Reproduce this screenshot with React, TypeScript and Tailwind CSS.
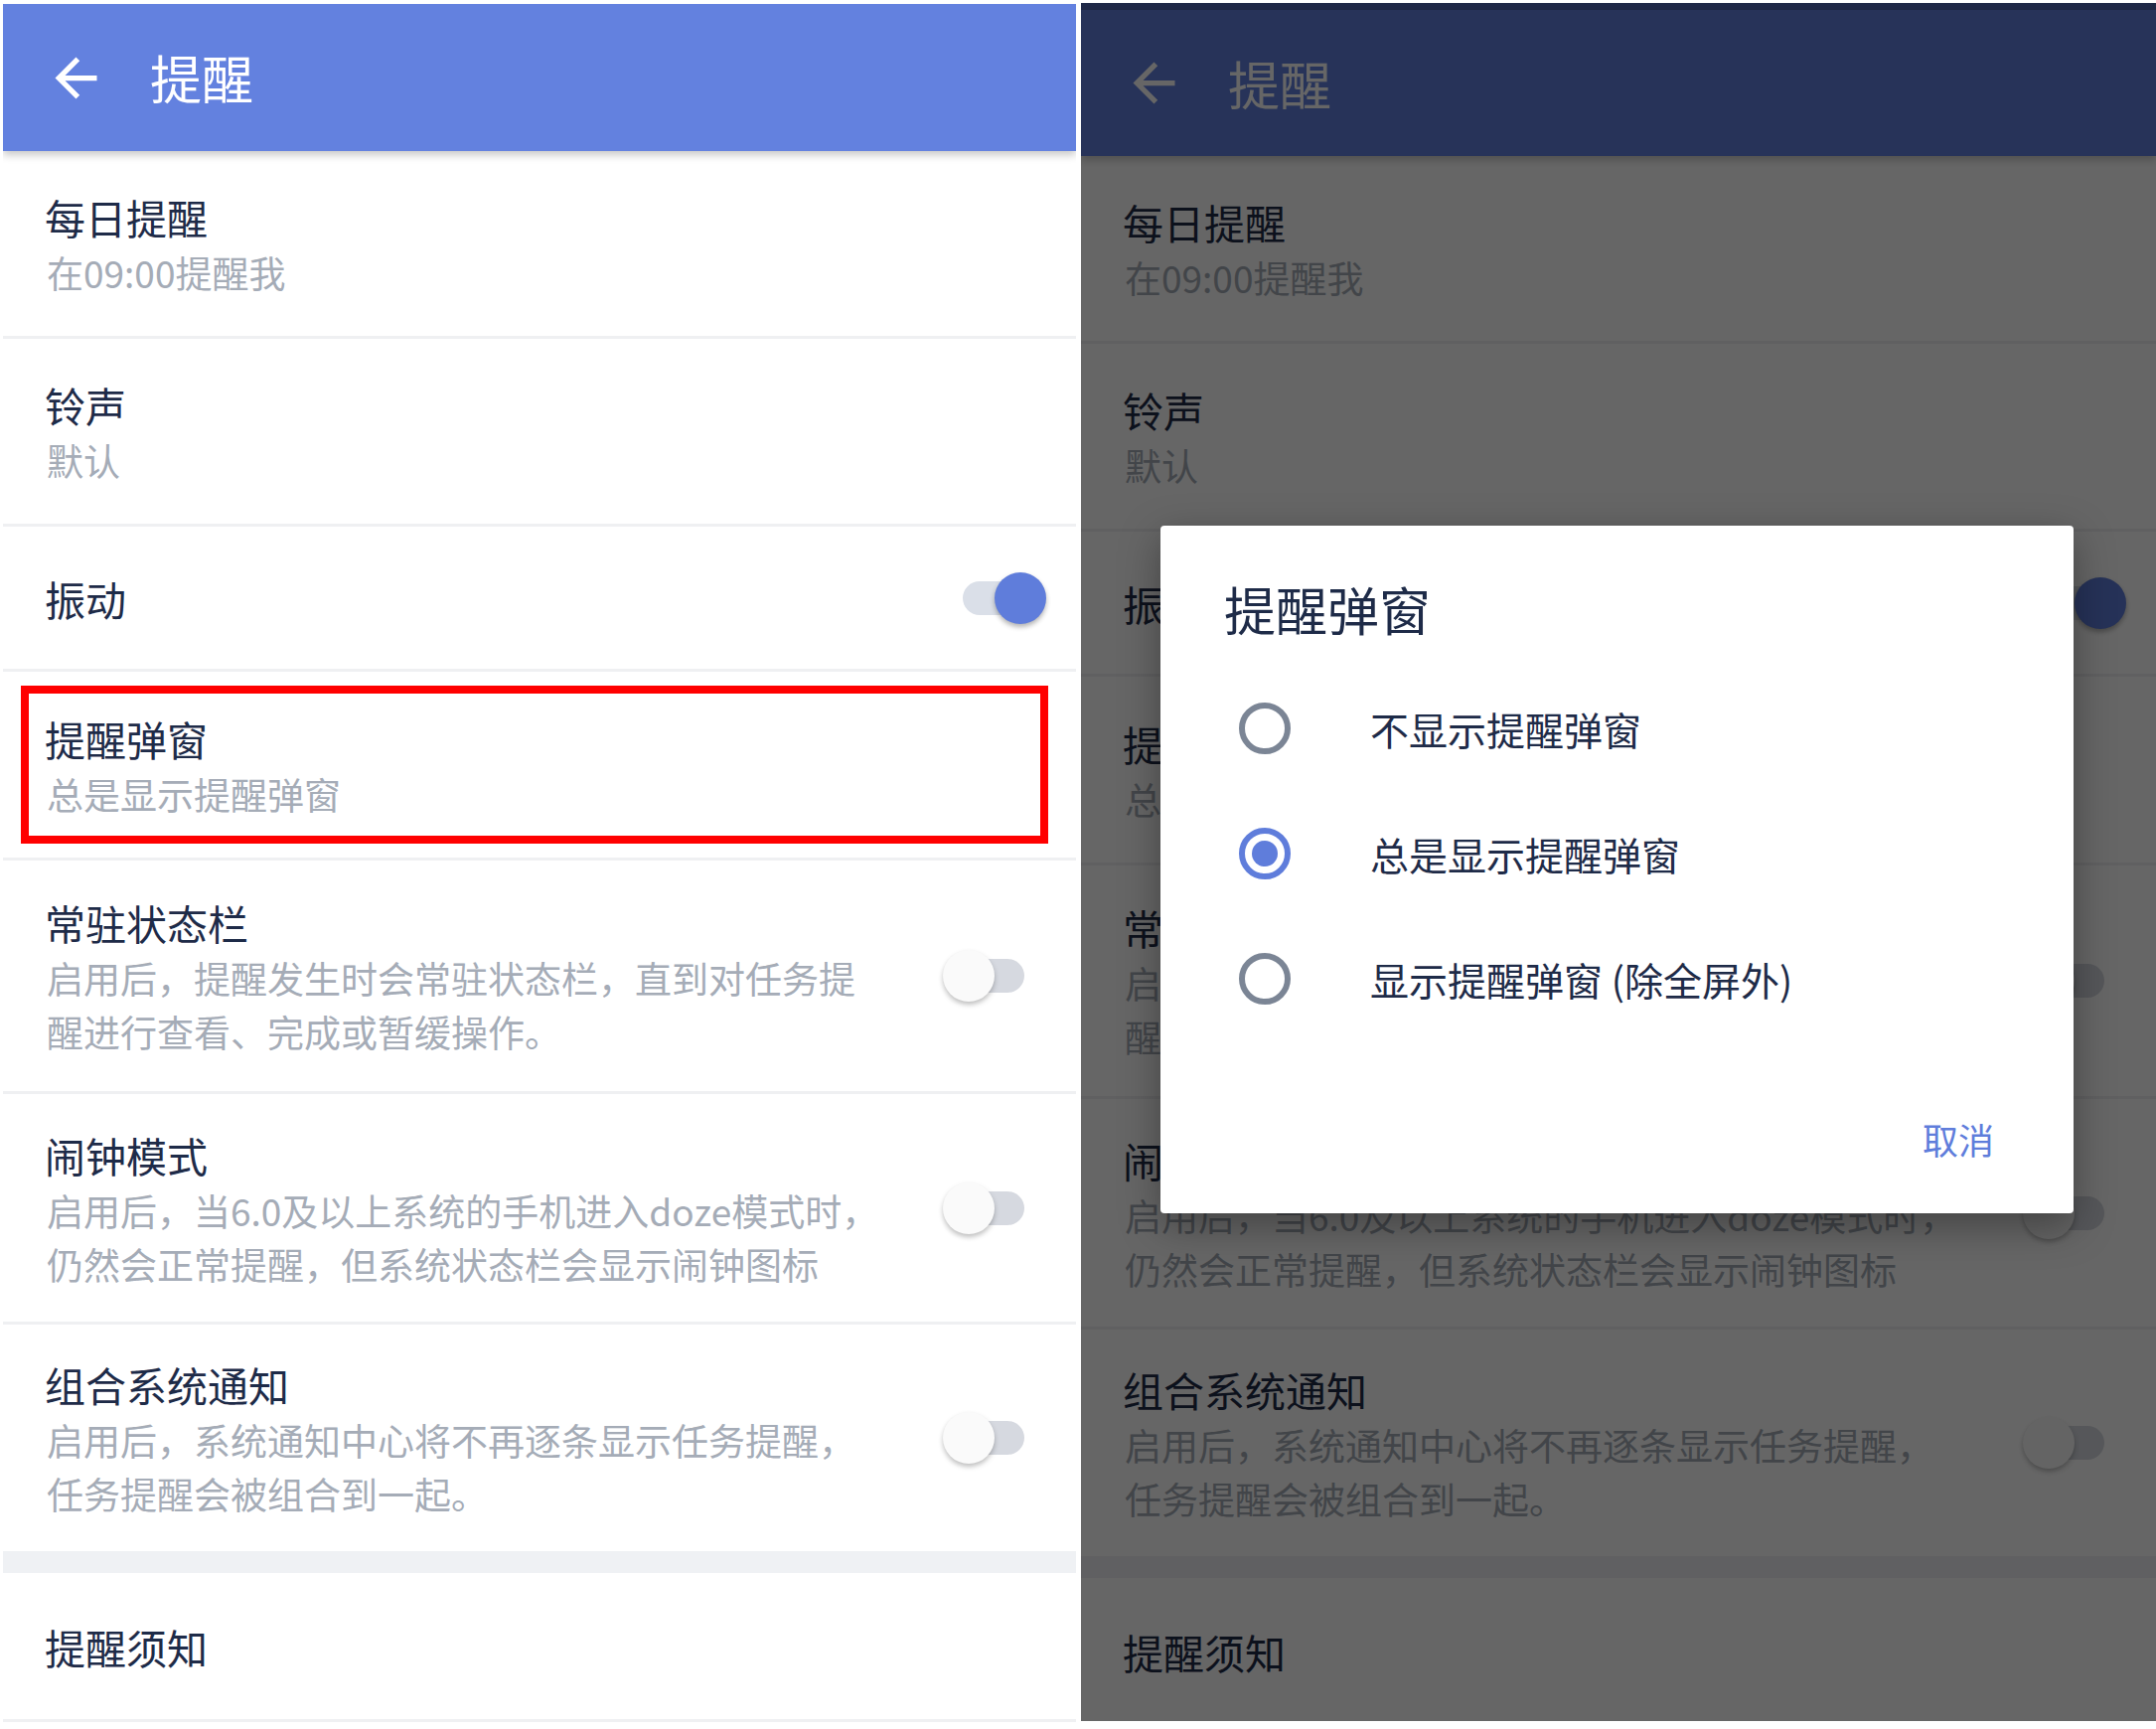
import React from 'react'

type Row = {
  title: string
  sub?: string[]
  toggle?: 'on' | 'off'
  height: string
  divider: boolean
  highlight?: boolean
}

const rows: Row[] = [
  { title: '每日提醒', sub: ['在09:00提醒我'], height: 'h-[189px]', divider: true },
  { title: '铃声', sub: ['默认'], height: 'h-[189px]', divider: true },
  { title: '振动', toggle: 'on', height: 'h-[146px]', divider: true },
  { title: '提醒弹窗', sub: ['总是显示提醒弹窗'], height: 'h-[190px]', divider: true, highlight: true },
  {
    title: '常驻状态栏',
    sub: ['启用后，提醒发生时会常驻状态栏，直到对任务提', '醒进行查看、完成或暂缓操作。'],
    toggle: 'off',
    height: 'h-[235px]',
    divider: true,
  },
  {
    title: '闹钟模式',
    sub: ['启用后，当6.0及以上系统的手机进入doze模式时，', '仍然会正常提醒，但系统状态栏会显示闹钟图标'],
    toggle: 'off',
    height: 'h-[232px]',
    divider: true,
  },
  {
    title: '组合系统通知',
    sub: ['启用后，系统通知中心将不再逐条显示任务提醒，', '任务提醒会被组合到一起。'],
    toggle: 'off',
    height: 'h-[228px]',
    divider: false,
  },
]

const options = ['不显示提醒弹窗', '总是显示提醒弹窗', '显示提醒弹窗 (除全屏外)']

function BackArrow() {
  return (
    <svg viewBox="0 0 24 24" className="h-[63px] w-[63px] fill-current">
      <path d="M20 11H7.83l5.59-5.59L12 4l-8 8 8 8 1.41-1.41L7.83 13H20v-2z" />
    </svg>
  )
}

function Toggle({ on }: { on: boolean }) {
  return (
    <div className="relative h-[52px] w-[104px] shrink-0">
      <div
        className={`absolute left-[20px] top-[9px] h-[34px] w-[62px] rounded-full ${
          on ? 'bg-[#dadfe8]' : 'bg-[#d6d9e0]'
        }`}
      />
      {on ? (
        <div className="absolute right-0 top-0 h-[52px] w-[52px] rounded-full bg-[#5f7ddb] shadow-[0_3px_5px_rgba(0,0,0,0.3)]" />
      ) : (
        <div className="absolute left-0 top-0 h-[52px] w-[52px] rounded-full bg-[#fafafa] shadow-[0_3px_5px_rgba(0,0,0,0.25)]" />
      )}
    </div>
  )
}

function SettingRow({ row, showHighlight }: { row: Row; showHighlight: boolean }) {
  return (
    <div
      className={`relative flex items-center pl-[44px] pr-[30px] ${row.height} ${
        row.divider ? 'border-b-[3px] border-[#eff0f2]' : ''
      }`}
    >
      <div className="flex-1">
        <div className="-ml-[2px] text-[41px] leading-[58px] text-[#1e2b48]">{row.title}</div>
        {row.sub?.map((line) => (
          <div key={line} className="whitespace-nowrap text-[37px] leading-[54px] text-[#a5acb7]">
            {line}
          </div>
        ))}
      </div>
      {row.toggle && <Toggle on={row.toggle === 'on'} />}
      {showHighlight && row.highlight && (
        <div className="pointer-events-none absolute bottom-[14px] left-[18px] right-[28px] top-[14px] border-[8px] border-[#ff0000]" />
      )}
    </div>
  )
}

function SettingsScreen({ dimmed }: { dimmed: boolean }) {
  return (
    <div className="relative z-0 flex flex-col bg-white">
      {dimmed && <div className="h-[7px] bg-[#4d64b1]" />}
      <div
        className={`relative z-10 flex items-center bg-[#6381df] pl-[42px] text-white shadow-[0_4px_8px_rgba(0,0,0,0.22)] ${
          dimmed ? 'h-[147px]' : 'h-[148px]'
        }`}
      >
        <BackArrow />
        <span className="ml-[43px] text-[52px] leading-none">提醒</span>
      </div>
      {rows.map((row) => (
        <SettingRow key={row.title} row={row} showHighlight={!dimmed} />
      ))}
      <div className="h-[22px] bg-[#eff1f4]" />
      <div className="flex h-[150px] items-center border-b-[3px] border-[#eff0f2] pl-[42px]">
        <div className="text-[41px] leading-[58px] text-[#1e2b48]">提醒须知</div>
      </div>
    </div>
  )
}

function RadioDot({ checked }: { checked: boolean }) {
  return checked ? (
    <div className="flex h-[52px] w-[52px] items-center justify-center rounded-full border-[6px] border-[#5f7ddb]">
      <div className="h-[26px] w-[26px] rounded-full bg-[#5f7ddb]" />
    </div>
  ) : (
    <div className="h-[52px] w-[52px] rounded-full border-[6px] border-[#7b8595]" />
  )
}

function ReminderDialog() {
  return (
    <div className="absolute left-[80px] top-[526px] z-30 flex h-[692px] w-[919px] flex-col rounded-[4px] bg-white shadow-[0_12px_40px_rgba(0,0,0,0.35)]">
      <div className="pl-[64px] pt-[54px] text-[52px] leading-[60px] text-[#1e2b48]">提醒弹窗</div>
      <div className="mt-[27px] flex flex-col">
        {options.map((opt, i) => (
          <div key={opt} className="flex h-[126px] items-center pl-[79px]">
            <RadioDot checked={i === 1} />
            <span className="ml-[80px] text-[39px] leading-none text-[#1e2b48]">{opt}</span>
          </div>
        ))}
      </div>
      <div className="mt-auto flex justify-end pb-[45px] pr-[80px]">
        <span className="text-[36px] leading-[60px] text-[#5f7ddb]">取消</span>
      </div>
    </div>
  )
}

export default function App() {
  return (
    <div className="flex h-[1740px] w-[2170px] bg-white font-['Noto_Sans_CJK_SC',sans-serif]">
      <div className="ml-[3px] mt-[4px] h-[1729px] w-[1080px] overflow-hidden">
        <SettingsScreen dimmed={false} />
      </div>
      <div className="relative isolate ml-[5px] mt-[3px] h-[1729px] w-[1082px] overflow-hidden">
        <SettingsScreen dimmed />
        <div className="absolute inset-0 z-20 bg-black/60" />
        <ReminderDialog />
      </div>
    </div>
  )
}
